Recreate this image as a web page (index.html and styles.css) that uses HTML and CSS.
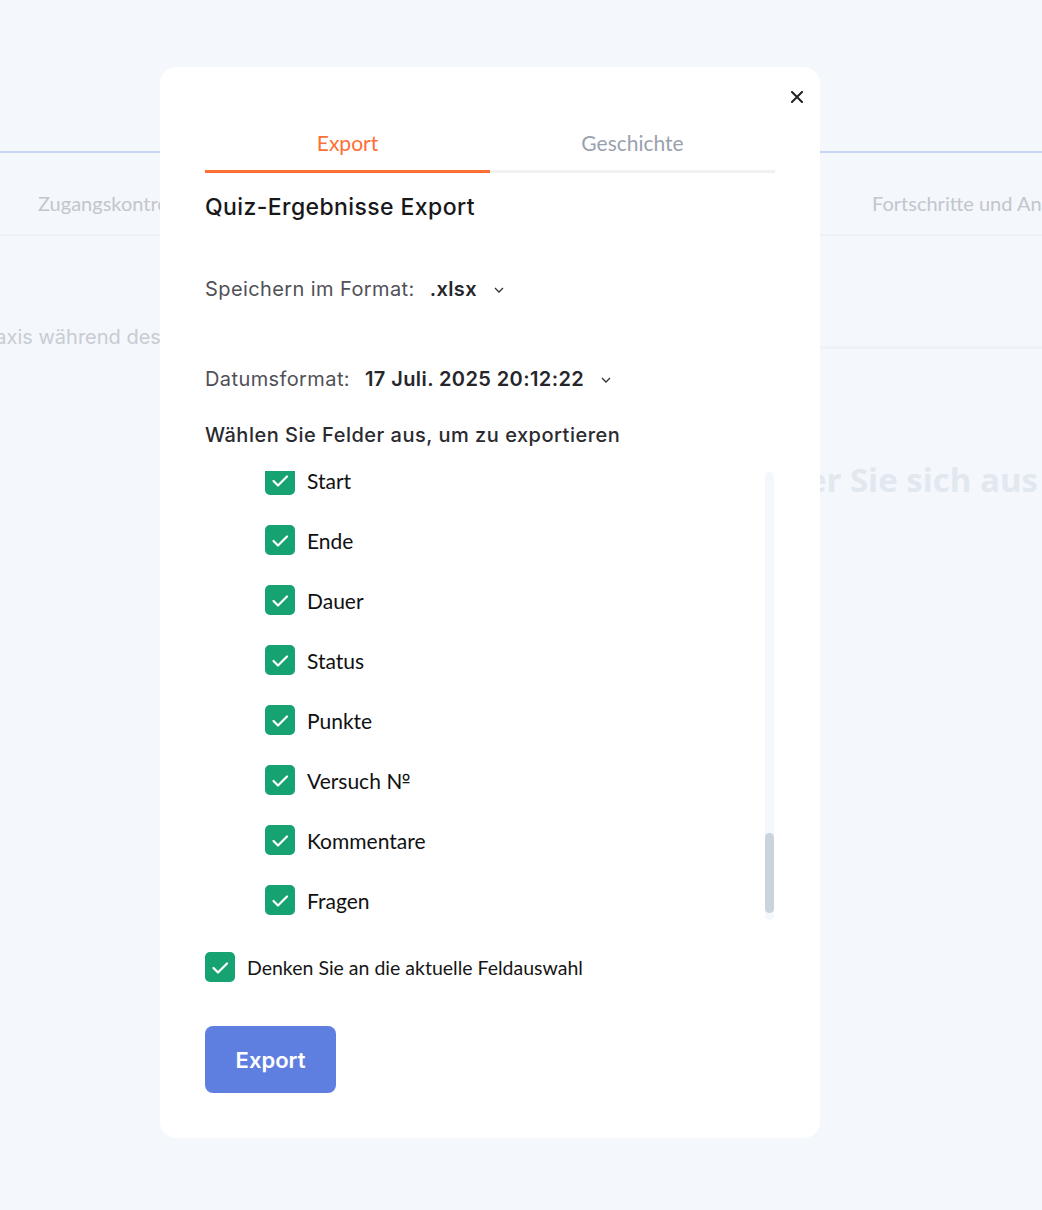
FILE: index.html
```html
<!DOCTYPE html>
<html lang="de">
<head>
<meta charset="utf-8">
<title>Quiz-Ergebnisse Export</title>
<link rel="stylesheet" href="styles.css">
</head>
<body>
<div class="page">
  <div class="bg-header"></div>
  <div class="bg-tabs">
    <span class="bg-tab bg-tab-first">Zugangskontrolle</span>
    <span class="bg-tab bg-tab-hidden">Einstellungen</span>
    <span class="bg-tab">Fortschritte und Analysen</span>
  </div>
  <div class="bg-content">
    <div class="bg-left">
      <p class="bg-text">Praxis während des Quiz</p>
    </div>
    <div class="bg-right">
      <div class="bg-right-head"></div>
      <h2 class="bg-heading">Wählen Sie einen Kurs oder Sie sich aus</h2>
    </div>
  </div>
</div>

<div class="modal">
  <button class="close" aria-label="Schließen">
    <svg width="12" height="12" viewBox="0 0 12 12"><path d="M1 1L11 11M11 1L1 11" stroke="#222" stroke-width="2" stroke-linecap="square"/></svg>
  </button>
  <div class="tabs">
    <div class="tab tab-active">Export</div>
    <div class="tab">Geschichte</div>
  </div>
  <h1 class="title">Quiz-Ergebnisse Export</h1>

  <div class="field field-format">
    <span class="field-label">Speichern im Format:</span>
    <span class="field-value">.xlsx</span>
    <svg class="chev" width="10" height="6" viewBox="0 0 10 6"><path d="M1 1L5 5L9 1" fill="none" stroke="#333" stroke-width="1.3"/></svg>
  </div>

  <div class="field field-date">
    <span class="field-label">Datumsformat:</span>
    <span class="field-value">17 Juli. 2025 20:12:22</span>
    <svg class="chev" width="10" height="6" viewBox="0 0 10 6"><path d="M1 1L5 5L9 1" fill="none" stroke="#333" stroke-width="1.3"/></svg>
  </div>

  <h3 class="subtitle">Wählen Sie Felder aus, um zu exportieren</h3>

  <div class="list-wrap">
    <ul class="list">
      <li class="item"><span class="cb"><svg width="30" height="30" viewBox="0 0 30 30"><path d="M8.5 16L13 20.5L22 11.5" fill="none" stroke="#fff" stroke-width="2.2" stroke-linecap="round" stroke-linejoin="round"/></svg></span>Start</li>
      <li class="item"><span class="cb"><svg width="30" height="30" viewBox="0 0 30 30"><path d="M8.5 16L13 20.5L22 11.5" fill="none" stroke="#fff" stroke-width="2.2" stroke-linecap="round" stroke-linejoin="round"/></svg></span>Ende</li>
      <li class="item"><span class="cb"><svg width="30" height="30" viewBox="0 0 30 30"><path d="M8.5 16L13 20.5L22 11.5" fill="none" stroke="#fff" stroke-width="2.2" stroke-linecap="round" stroke-linejoin="round"/></svg></span>Dauer</li>
      <li class="item"><span class="cb"><svg width="30" height="30" viewBox="0 0 30 30"><path d="M8.5 16L13 20.5L22 11.5" fill="none" stroke="#fff" stroke-width="2.2" stroke-linecap="round" stroke-linejoin="round"/></svg></span>Status</li>
      <li class="item"><span class="cb"><svg width="30" height="30" viewBox="0 0 30 30"><path d="M8.5 16L13 20.5L22 11.5" fill="none" stroke="#fff" stroke-width="2.2" stroke-linecap="round" stroke-linejoin="round"/></svg></span>Punkte</li>
      <li class="item"><span class="cb"><svg width="30" height="30" viewBox="0 0 30 30"><path d="M8.5 16L13 20.5L22 11.5" fill="none" stroke="#fff" stroke-width="2.2" stroke-linecap="round" stroke-linejoin="round"/></svg></span>Versuch №</li>
      <li class="item"><span class="cb"><svg width="30" height="30" viewBox="0 0 30 30"><path d="M8.5 16L13 20.5L22 11.5" fill="none" stroke="#fff" stroke-width="2.2" stroke-linecap="round" stroke-linejoin="round"/></svg></span>Kommentare</li>
      <li class="item"><span class="cb"><svg width="30" height="30" viewBox="0 0 30 30"><path d="M8.5 16L13 20.5L22 11.5" fill="none" stroke="#fff" stroke-width="2.2" stroke-linecap="round" stroke-linejoin="round"/></svg></span>Fragen</li>
    </ul>
    <div class="scroll-track"><div class="scroll-thumb"></div></div>
  </div>

  <label class="remember"><span class="cb"><svg width="30" height="30" viewBox="0 0 30 30"><path d="M8.5 16L13 20.5L22 11.5" fill="none" stroke="#fff" stroke-width="2.2" stroke-linecap="round" stroke-linejoin="round"/></svg></span>Denken Sie an die aktuelle Feldauswahl</label>

  <button class="export-btn">Export</button>
</div>
</body>
</html>
```

FILE: styles.css
```css
* { box-sizing: border-box; }
html, body { margin: 0; padding: 0; }
body {
  background: #f4f7fc;
  font-family: "Inter", "Liberation Sans", sans-serif;
  width: 1042px;
  height: 1210px;
  overflow: hidden;
  position: relative;
}

/* background page */
.page { width: 1042px; }
.bg-header {
  height: 153px;
  border-bottom: 2px solid #c8d6f6;
}
.bg-tabs {
  height: 83px;
  border-bottom: 2px solid #eef1f6;
  display: flex;
  align-items: center;
  padding: 18px 0 0 38px;
  overflow: hidden;
  white-space: nowrap;
}
.bg-tab {
  font-family: "Lato", sans-serif;
  font-size: 20px;
  color: #c2c6cd;
  flex: none;
}
.bg-tab-first { width: 300px; }
.bg-tab-hidden { width: 534px; }
.bg-content {
  display: grid;
  grid-template-columns: 600px 442px;
}
.bg-left { overflow: hidden; }
.bg-text {
  margin: 89px 0 0 -25px;
  font-size: 20px;
  color: #c8ccd3;
  white-space: nowrap;
}
.bg-right { overflow: hidden; }
.bg-right-head {
  height: 113px;
  border-bottom: 3px solid #eef1f6;
}
.bg-heading {
  margin: 108px 4px 0 0;
  font-family: "Open Sans", sans-serif;
  font-weight: 700;
  font-size: 33px;
  color: #e2e8f0;
  white-space: nowrap;
  text-align: right;
  direction: rtl;
}

/* modal */
.modal {
  position: absolute;
  left: 160px;
  top: 67px;
  width: 660px;
  height: 1071px;
  background: #fff;
  border-radius: 16px;
  padding: 0 45px;
  display: flex;
  flex-direction: column;
}
.close {
  position: absolute;
  top: 24px;
  right: 17px;
  width: 12px;
  height: 12px;
  padding: 0;
  border: 0;
  background: none;
  display: block;
}
.close svg { display: block; }

.tabs {
  display: grid;
  grid-template-columns: 1fr 1fr;
  margin-top: 64px;
}
.tab {
  font-family: "Lato", sans-serif;
  font-size: 21px;
  line-height: 24px;
  text-align: center;
  color: #9aa1ae;
  padding-bottom: 15px;
  border-bottom: 3px solid #f1f1f1;
}
.tab-active {
  color: #fd6f35;
  border-bottom-color: #fd6f35;
}

.title {
  margin: 20px 0 0;
  font-size: 23px;
  line-height: 28px;
  font-weight: 500;
  letter-spacing: 0.4px;
  color: #18181b;
}

.field {
  display: flex;
  align-items: center;
  font-size: 20px;
  line-height: 24px;
  letter-spacing: 0.4px;
}
.field-format { margin-top: 56px; }
.field-date { margin-top: 66px; }
.field-label { color: #505058; }
.field-value {
  margin-left: 15px;
  font-weight: 600;
  color: #26262b;
}
.chev { margin-left: 17px; margin-top: 2px; }

.subtitle {
  margin: 31px 0 0;
  font-size: 20px;
  line-height: 26px;
  font-weight: 500;
  letter-spacing: 0.5px;
  color: #2a2a2f;
}

.list-wrap {
  position: relative;
  margin-top: 23px;
  height: 449px;
  overflow: hidden;
}
.list {
  list-style: none;
  margin: -21px 0 0;
  padding: 0 0 0 60px;
}
.item {
  height: 60px;
  display: flex;
  align-items: center;
  gap: 12px;
  font-family: "Lato", sans-serif;
  font-size: 21px;
  color: #111;
}
.cb {
  width: 30px;
  height: 30px;
  border-radius: 5px;
  background: #17a272;
  flex: none;
  display: block;
}
.cb svg { display: block; }
.scroll-track {
  position: absolute;
  right: 1px;
  top: 1px;
  width: 9px;
  height: 448px;
  border-radius: 5px;
  background: #f4f7fb;
}
.scroll-thumb {
  position: absolute;
  left: 0;
  top: 361px;
  width: 9px;
  height: 80px;
  border-radius: 5px;
  background: #cbd3dd;
}

.remember {
  margin-top: 32px;
  display: flex;
  align-items: center;
  gap: 12px;
  font-family: "Lato", sans-serif;
  font-size: 19.5px;
  color: #161616;
}

.export-btn {
  margin-top: 44px;
  width: 131px;
  height: 67px;
  border: 0;
  border-radius: 8px;
  background: #5f7fe0;
  color: #fff;
  font-family: "Inter", sans-serif;
  font-size: 22px;
  font-weight: 600;
  padding: 0;
}
```
